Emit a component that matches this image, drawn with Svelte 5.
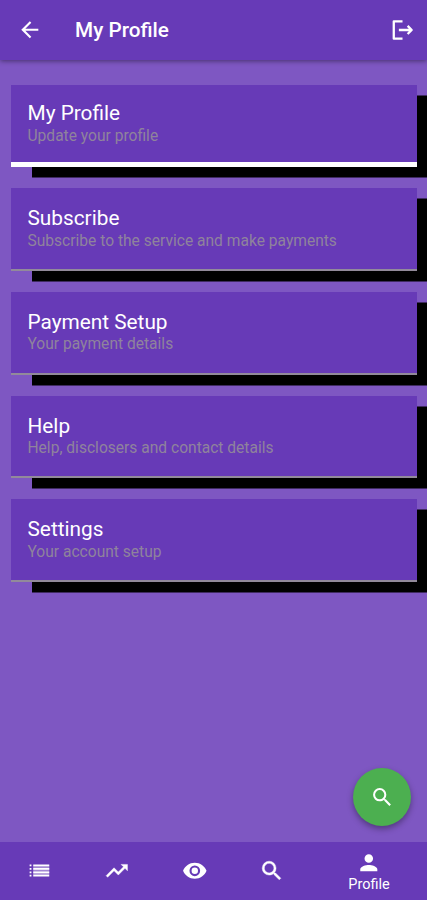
<script>
  const cards = [
    { title: 'My Profile', detail: 'Update your profile', active: true },
    { title: 'Subscribe', detail: 'Subscribe to the service and make payments' },
    { title: 'Payment Setup', detail: 'Your payment details' },
    { title: 'Help', detail: 'Help, disclosers and contact details' },
    { title: 'Settings', detail: 'Your account setup' }
  ];
  const searchPath =
    'M15.5 14h-.79l-.28-.27A6.47 6.47 0 0 0 16 9.5 6.5 6.5 0 1 0 9.5 16c1.61 0 3.09-.59 4.23-1.57l.27.28v.79l5 4.99L20.49 19zm-6 0a4.5 4.5 0 1 1 0-9 4.5 4.5 0 0 1 0 9z';
</script>

<div class="screen">
  <header>
    <svg class="back" viewBox="0 0 24 24"><path d="M20 11H7.83l5.59-5.59L12 4l-8 8 8 8 1.41-1.41L7.83 13H20z" /></svg>
    <h1>My Profile</h1>
    <svg class="exit" viewBox="0 0 24 24">
      <path d="M12.5 3.2H4.1v16.6h8.4M9 11.5h12M17.4 7.6l3.9 3.9-3.9 3.9" fill="none" stroke="#fff" stroke-width="2.2" stroke-linejoin="round" />
    </svg>
  </header>

  <main>
    {#each cards as card}
      <section class="card" class:active={card.active}>
        <h2>{card.title}</h2>
        <p>{card.detail}</p>
      </section>
    {/each}
  </main>

  <button class="fab" aria-label="Search"><svg viewBox="0 0 24 24"><path d={searchPath} /></svg></button>

  <nav>
    <div class="tab"><svg viewBox="0 0 24 24"><path d="M3.4 6.2h1.7v1.6H3.4zM3.4 9.4h1.7V11H3.4zM3.4 12.6h1.7v1.6H3.4zM3.4 15.8h1.7v1.6H3.4zM6.8 6.2h15v1.6h-15zM6.8 9.4h15V11h-15zM6.8 12.6h15v1.6h-15zM6.8 15.8h15v1.6h-15z" /><path d="M6.8 7h15v9h-15z" opacity=".4" /></svg></div>
    <div class="tab"><svg viewBox="0 0 24 24"><path d="M16 6l2.29 2.29-4.88 4.88-4-4L2 16.59 3.41 18l6-6 4 4 6.3-6.29L22 12V6z" stroke="#fff" stroke-width=".4" /></svg></div>
    <div class="tab"><svg viewBox="0 0 24 24"><path d="M12 4.5C7 4.5 2.73 7.61 1 12c1.73 4.39 6 7.5 11 7.5s9.27-3.11 11-7.5c-1.73-4.39-6-7.5-11-7.5zM12 17a5 5 0 1 1 0-10 5 5 0 0 1 0 10zm0-8a3 3 0 1 0 0 6 3 3 0 0 0 0-6z" /></svg></div>
    <div class="tab"><svg viewBox="0 0 24 24"><path d={searchPath} stroke="#fff" stroke-width=".4" /></svg></div>
    <div class="tab current">
      <svg viewBox="0 0 24 24"><path d="M12 12a4 4 0 1 0 0-8 4 4 0 0 0 0 8zm0 2c-2.67 0-8 1.34-8 4v2h16v-2c0-2.66-5.33-4-8-4z" /></svg>
      <span>Profile</span>
    </div>
  </nav>
</div>

<style>
  :global(body) { margin: 0; }
  .screen {
    position: relative;
    display: flex;
    flex-direction: column;
    width: 427px;
    height: 900px;
    overflow: hidden;
    background: #7e57c2;
    color: #fff;
    font-family: Roboto, sans-serif;
  }
  svg { display: block; fill: #fff; flex: none; }
  header {
    display: flex;
    align-items: center;
    box-sizing: border-box;
    height: 60px;
    flex: none;
    padding: 0 12.5px 0 17px;
    background: #673ab7;
    box-shadow: 0 1px 5px rgba(0, 0, 0, 0.45);
  }
  h1 { flex: 1; margin: 0 0 0 32.5px; font-size: 20.7px; font-weight: 500; line-height: 24px; }
  .back { width: 25.6px; height: 25.6px; }
  .exit { width: 26px; height: 25px; }
  main {
    flex: 1;
    display: flex;
    flex-direction: column;
    gap: 21.2px;
    padding: 24.7px 10px 0 11px;
  }
  .card {
    box-sizing: border-box;
    height: 82.5px;
    padding: 17.9px 16.5px 0;
    background: #673ab7;
    border-bottom: 2px solid #928a9a;
    box-shadow: 21px 10.5px 0 #000;
  }
  .card.active { padding-top: 16.4px; border-bottom: 5px solid #fff; }
  h2 { margin: 0; font-size: 20.8px; font-weight: 400; line-height: 25px; }
  p { margin: 0.5px 0 0; color: #8f839c; font-size: 15.58px; line-height: 19px; }
  .fab {
    position: absolute;
    left: 353px;
    top: 768px;
    display: grid;
    place-items: center;
    width: 58px;
    height: 58px;
    padding: 0;
    border: 0;
    border-radius: 50%;
    background: #4caf50;
    box-shadow: 0 3px 6px rgba(0, 0, 0, 0.35);
  }
  .fab svg { width: 24.5px; height: 24.5px; }
  nav {
    display: flex;
    height: 58px;
    flex: none;
    background: #673ab7;
  }
  .tab {
    display: flex;
    flex-direction: column;
    align-items: center;
    justify-content: center;
    width: 77.8px;
  }
  .tab svg { width: 25.6px; height: 25.6px; }
  .tab.current { flex: 1; justify-content: flex-start; padding-top: 8.4px; }
  .tab span { font-size: 14.5px; line-height: 17px; }
</style>
